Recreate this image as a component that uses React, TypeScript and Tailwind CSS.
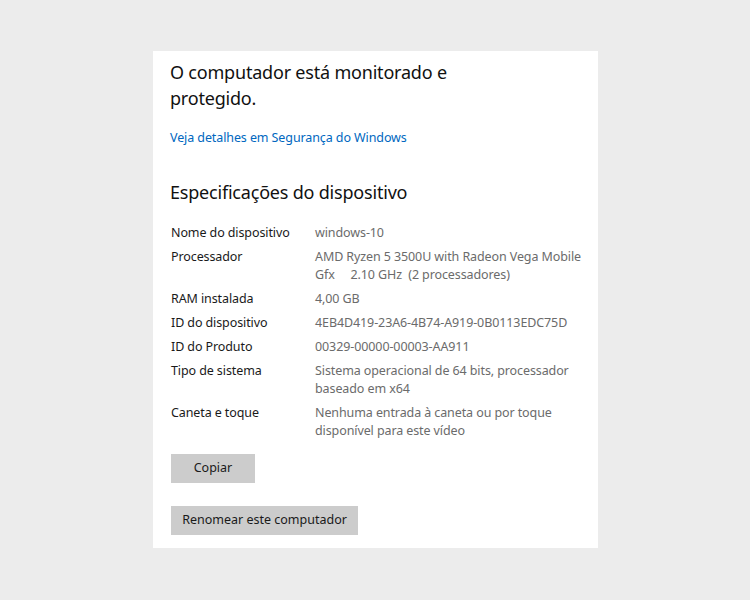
import React from "react";

const specs: Array<{ label: string; value: React.ReactNode }> = [
  { label: "Nome do dispositivo", value: "windows-10" },
  {
    label: "Processador",
    value: (
      <>
        AMD Ryzen 5 3500U with Radeon Vega Mobile
        <br />
        {"Gfx     2.10 GHz  (2 processadores)"}
      </>
    ),
  },
  { label: "RAM instalada", value: "4,00 GB" },
  { label: "ID do dispositivo", value: "4EB4D419-23A6-4B74-A919-0B0113EDC75D" },
  { label: "ID do Produto", value: "00329-00000-00003-AA911" },
  {
    label: "Tipo de sistema",
    value: (
      <>
        Sistema operacional de 64 bits, processador
        <br />
        baseado em x64
      </>
    ),
  },
  {
    label: "Caneta e toque",
    value: (
      <>
        Nenhuma entrada à caneta ou por toque
        <br />
        disponível para este vídeo
      </>
    ),
  },
];

export default function App() {
  return (
    <div
      className="min-h-[600px] w-[750px] bg-[#ececec] pt-[51px]"
      style={{ fontFamily: '"Noto Sans", "Open Sans", sans-serif' }}
    >
      <div className="ml-[153px] w-[445px] h-[497px] bg-white pl-[17px] pt-[8px]">
        {/* Status */}
        <h1 className="text-[18px] leading-[26px] text-[#111] tracking-[-0.2px]">
          O computador está monitorado e
          <br />
          protegido.
        </h1>
        <a className="block mt-[18px] text-[12.5px] leading-[18px] text-[#0067c0] tracking-[-0.1px]">
          Veja detalhes em Segurança do Windows
        </a>

        {/* Especificações */}
        <h2 className="mt-[32px] text-[18px] leading-[26px] text-[#111] tracking-[-0.2px]">
          Especificações do dispositivo
        </h2>
        <div className="mt-[19px] ml-[1px] flex flex-col gap-[6px] text-[12.5px] leading-[18px] tracking-[-0.1px]">
          {specs.map((s) => (
            <div key={s.label} className="grid grid-cols-[144px_1fr]">
              <span className="text-[#1a1a1a]">{s.label}</span>
              <span className="text-[#6b6b6b] whitespace-pre">{s.value}</span>
            </div>
          ))}
        </div>

        <div className="ml-[1px] flex flex-col items-start">
          <button className="mt-[14px] w-[84px] h-[29px] bg-[#cccccc] text-[12.5px] text-[#1a1a1a]">
            Copiar
          </button>
          <button className="mt-[23px] w-[187px] h-[29px] bg-[#cccccc] text-[12.5px] text-[#1a1a1a]">
            Renomear este computador
          </button>
        </div>
      </div>
    </div>
  );
}
